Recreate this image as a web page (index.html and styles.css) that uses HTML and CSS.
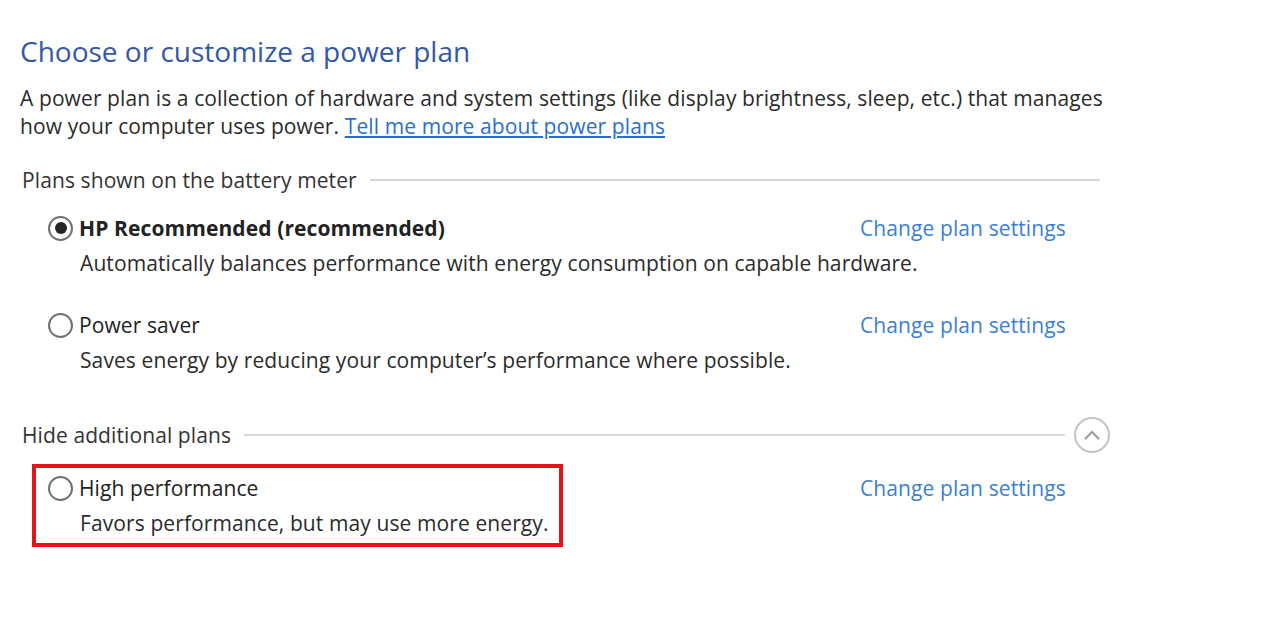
FILE: index.html
```html
<!DOCTYPE html>
<html lang="en">
<head>
  <meta charset="UTF-8">
  <meta name="viewport" content="width=device-width, initial-scale=1.0">
  <title>Power Options</title>
  <link rel="stylesheet" href="styles.css">
</head>
<body>

<main class="page">
  <h1 class="title">Choose or customize a power plan</h1>
  <p class="intro">
    A power plan is a collection of hardware and system settings (like display brightness, sleep, etc.) that manages<br>
    how your computer uses power. <a href="#" class="more">Tell me more about power plans</a>
  </p>

  <div class="group-head first">
    <span>Plans shown on the battery meter</span>
    <span class="rule"></span>
  </div>

  <div class="plan first">
    <div class="plan-main">
      <label class="plan-name bold"><span class="radio checked"></span>HP Recommended (recommended)</label>
      <div class="plan-desc">Automatically balances performance with energy consumption on capable hardware.</div>
    </div>
    <a href="#" class="plan-link">Change plan settings</a>
  </div>

  <div class="plan">
    <div class="plan-main">
      <label class="plan-name"><span class="radio"></span>Power saver</label>
      <div class="plan-desc">Saves energy by reducing your computer’s performance where possible.</div>
    </div>
    <a href="#" class="plan-link">Change plan settings</a>
  </div>

  <div class="group-head extra">
    <span>Hide additional plans</span>
    <span class="rule"></span>
    <button class="collapse" type="button">
      <svg width="20" height="12" viewBox="0 0 20 12"><path d="M3 10 L10 3 L17 10" fill="none" stroke="#9a9a9a" stroke-width="2"/></svg>
    </button>
  </div>

  <div class="plan boxed">
    <div class="plan-main highlight">
      <label class="plan-name"><span class="radio"></span>High performance</label>
      <div class="plan-desc">Favors performance, but may use more energy.</div>
    </div>
    <a href="#" class="plan-link">Change plan settings</a>
  </div>
</main>

</body>
</html>
```

FILE: styles.css
```css
body {
  margin: 0;
  background-color: #fff;
  color: #2b2b2b;
  font-family: "Open Sans", "Noto Sans", sans-serif;
  font-size: 21px;
  letter-spacing: 0.1px;
}

.page {
  padding: 33px 0 0 20px;
  width: 1090px;
}

.title {
  margin: 0;
  font-size: 28px;
  font-weight: normal;
  line-height: 36px;
  letter-spacing: 0;
  color: #3258a8;
}

.intro {
  margin: 15px 0 0 0;
  line-height: 28px;
  white-space: nowrap;
}

.more {
  color: #2a6fcf;
  text-decoration: underline;
}

.group-head {
  display: flex;
  align-items: center;
  height: 28px;
  padding-left: 2px;
  color: #333;
}

.group-head.first {
  margin-top: 26px;
  padding-right: 10px;
}

.group-head.extra {
  margin-top: 44px;
}

.rule {
  flex: 1;
  height: 2px;
  margin-left: 13px;
  background-color: #d8d8d8;
}

.collapse {
  width: 36px;
  height: 36px;
  margin-left: 9px;
  padding: 0;
  border: 2px solid #c4c4c4;
  border-radius: 50%;
  background-color: #fff;
  display: flex;
  align-items: center;
  justify-content: center;
}

.plan {
  display: grid;
  grid-template-columns: 812px auto;
  align-items: start;
  margin-top: 27px;
  padding-left: 28px;
}

.plan.first {
  margin-top: 16px;
}

.plan.boxed {
  margin-top: 15px;
  padding-left: 12px;
  grid-template-columns: 828px auto;
}

.plan-main {
  display: flex;
  flex-direction: column;
  align-items: flex-start;
}

.highlight {
  justify-self: start;
  border: 4px solid #e8121b;
  padding: 2px 10px 3px 12px;
}

.plan-name {
  display: flex;
  align-items: center;
  height: 36px;
  color: #222;
}

.plan-name.bold {
  font-weight: bold;
}

.radio {
  width: 21px;
  height: 21px;
  margin-right: 6px;
  border: 2px solid #707070;
  border-radius: 50%;
  display: inline-flex;
  align-items: center;
  justify-content: center;
}

.radio.checked::after {
  content: "";
  width: 12px;
  height: 12px;
  border-radius: 50%;
  background-color: #262626;
}

.plan-desc {
  line-height: 34px;
  padding-left: 32px;
  white-space: nowrap;
}

.plan-link {
  line-height: 36px;
  color: #3a80d8;
  text-decoration: none;
}

.boxed .plan-link {
  margin-top: 6px;
}
```
